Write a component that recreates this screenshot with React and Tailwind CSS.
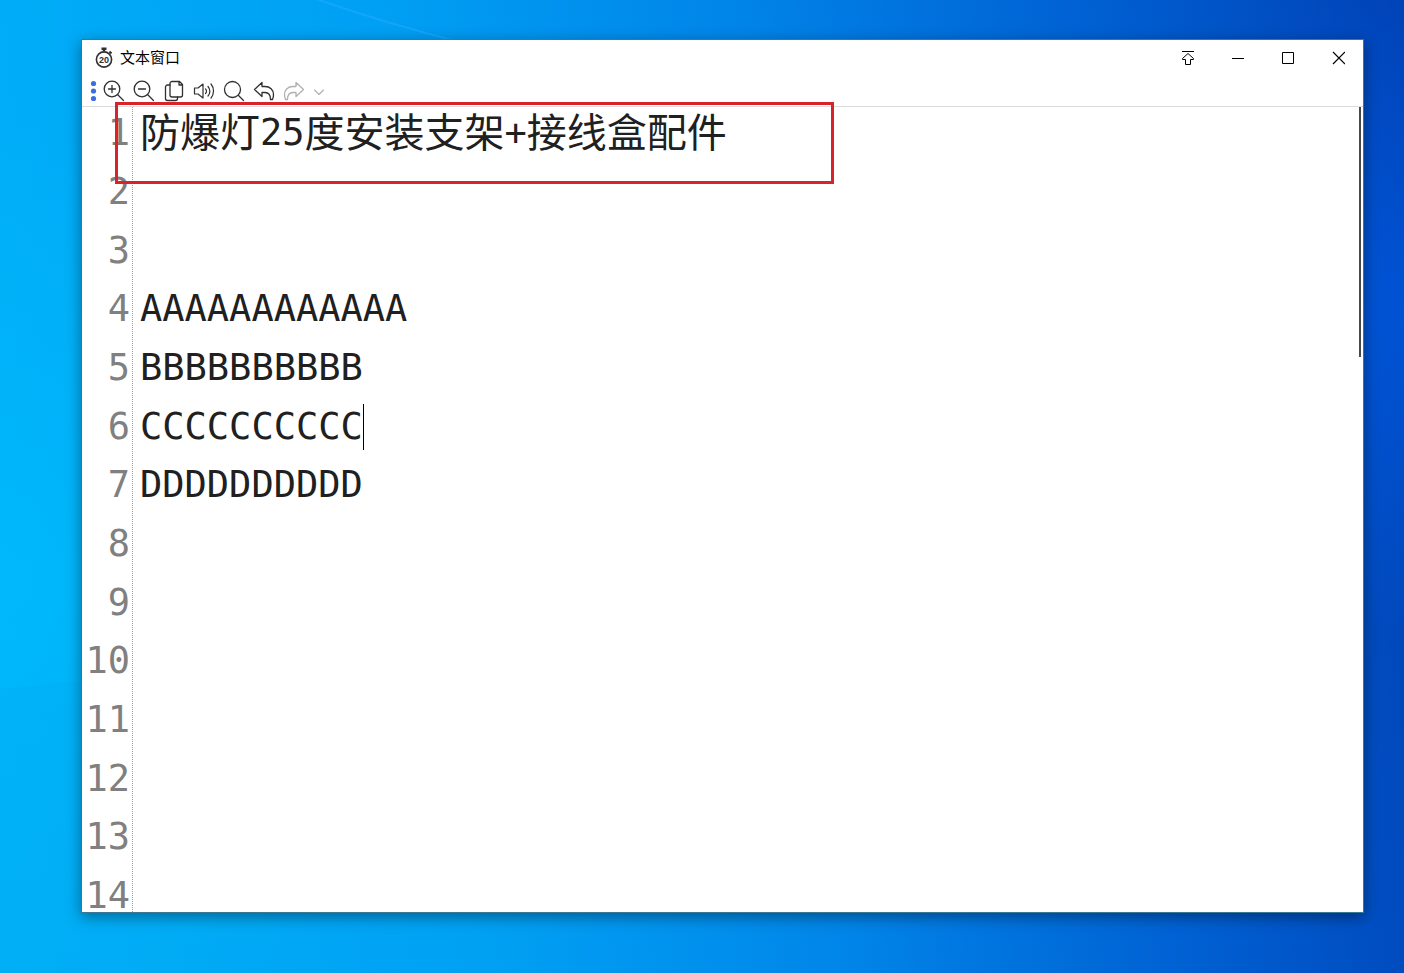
const lines = [
  ['防爆灯', '25', '度安装支架', '+', '接线盒配件'],
  [],
  [],
  ['AAAAAAAAAAAA'],
  ['BBBBBBBBBB'],
  ['CCCCCCCCCC'],
  ['DDDDDDDDDD'],
];

const caretLine = 5;

const lineNumbers = Array.from({ length: 14 }, (_, i) => i + 1);

const isLatin = (text) => /^[\x20-\x7e]+$/.test(text);

function Icon({ children, size = 22, width = 1.3 }) {
  return (
    <svg
      width={size}
      height={size}
      viewBox={`0 0 ${size} ${size}`}
      fill="none"
      stroke="currentColor"
      strokeWidth={width}
      strokeLinecap="round"
      strokeLinejoin="round"
      aria-hidden="true"
    >
      {children}
    </svg>
  );
}

function ToolButton({ label, disabled, small, children }) {
  return (
    <button
      type="button"
      title={label}
      aria-label={label}
      disabled={disabled}
      className={`flex h-[30px] items-center justify-center ${small ? 'w-5' : 'w-[30px]'} ${
        disabled ? 'text-[#b0b0b0]' : 'text-[#303030] hover:bg-gray-100'
      }`}
    >
      {children}
    </button>
  );
}

function WindowButton({ label, children }) {
  return (
    <button
      type="button"
      title={label}
      aria-label={label}
      className="flex h-9 w-[50px] items-center justify-center text-black hover:bg-gray-100"
    >
      <svg width="14" height="14" viewBox="0 0 14 14" fill="none" stroke="currentColor" aria-hidden="true">
        {children}
      </svg>
    </button>
  );
}

function TitleBar() {
  return (
    <header className="flex h-9 items-center justify-between pl-3">
      <div className="flex items-center gap-1.5">
        <svg width="20" height="22" viewBox="0 0 20 22" fill="none" stroke="#303030" aria-hidden="true">
          <path d="M7.5 1.8h5M10 1.5v3" strokeWidth="2.4" />
          <path d="M15.5 4.5l2 2" strokeWidth="2" />
          <circle cx="10" cy="12.5" r="7.6" strokeWidth="1.6" />
          <text x="10" y="16" textAnchor="middle" fontSize="9" fontWeight="700" fontFamily="Liberation Sans" fill="#303030" stroke="none">
            20
          </text>
        </svg>
        <h1 className="text-[15px] leading-5 text-black">文本窗口</h1>
      </div>
      <div className="flex">
        <WindowButton label="置顶">
          <path d="M1 .5h12M7 2.5l5.5 5v1H9.5v5h-5v-5h-3v-1z" />
        </WindowButton>
        <WindowButton label="最小化">
          <path d="M1 7.5h12" />
        </WindowButton>
        <WindowButton label="最大化">
          <path d="M1.5 1.5h11v11h-11z" />
        </WindowButton>
        <WindowButton label="关闭">
          <path d="M2 1l12 12M14 1L2 13" strokeWidth="1.2" />
        </WindowButton>
      </div>
    </header>
  );
}

function Toolbar() {
  return (
    <div role="toolbar" className="flex h-[31px] items-center border-b border-[#dcdcdc] pl-[7px]">
      <svg width="10" height="22" viewBox="0 0 10 22" fill="#3b6fe0" aria-hidden="true">
        <circle cx="4.5" cy="3.5" r="2.6" />
        <circle cx="4.5" cy="11" r="2.6" />
        <circle cx="4.5" cy="18.5" r="2.6" />
      </svg>
      <ToolButton label="放大">
        <Icon>
          <circle cx="9" cy="9" r="7.8" />
          <path d="M14.5 14.5l6 6M9 5.5v7M5.5 9h7" />
        </Icon>
      </ToolButton>
      <ToolButton label="缩小">
        <Icon>
          <circle cx="9" cy="9" r="7.8" />
          <path d="M14.5 14.5l6 6M5.5 9h7" />
        </Icon>
      </ToolButton>
      <ToolButton label="复制">
        <Icon>
          <path d="M9 1.5h7.5l3 3V15a2 2 0 0 1-2 2H9a2 2 0 0 1-2-2V3.5a2 2 0 0 1 2-2zM16 1.5V5h3.5" />
          <path d="M7 5H4.5a2 2 0 0 0-2 2v11.5a2 2 0 0 0 2 2h8a2 2 0 0 0 2-2V17" />
        </Icon>
      </ToolButton>
      <ToolButton label="朗读">
        <Icon width={1.2}>
          <path d="M1.5 8v6H5l5 4V4L5 8z" />
          <path d="M12.5 9a3 3 0 0 1 0 4.5M15 6.5a7 7 0 0 1 0 9.5M18 4a11 11 0 0 1 0 14" />
        </Icon>
      </ToolButton>
      <ToolButton label="查找">
        <Icon>
          <circle cx="9.5" cy="9.5" r="8" />
          <path d="M15.5 15.5l5 5" />
        </Icon>
      </ToolButton>
      <ToolButton label="撤销">
        <Icon>
          <path d="M1.5 9.5L9 2.5v4h3c5 0 8.5 3.5 8.5 8 0 2-.3 3.500-1 5h-2c0-4-1.500-7-5.500-7H9v4z" />
        </Icon>
      </ToolButton>
      <ToolButton label="重做" disabled>
        <Icon>
          <path d="M20.5 9.5L13 2.5v4h-3c-5 0-8.5 3.5-8.5 8 0 2 .3 3.500 1 5h2c0-4 1.500-7 5.500-7H13v4z" />
        </Icon>
      </ToolButton>
      <ToolButton label="更多" disabled small>
        <Icon size={12} width={1.1}>
          <path d="M1.5 5L6 9.5 10.5 5" />
        </Icon>
      </ToolButton>
    </div>
  );
}

function Editor() {
  return (
    <div className="flex min-h-0 flex-1 overflow-hidden">
      {/* Line numbers */}
      <ol
        aria-hidden="true"
        className="grid w-[51px] shrink-0 auto-rows-[59px_59px_58px] border-r border-dotted border-[#a0a0a0] pr-0.5 text-right font-['DejaVu_Sans_Mono',monospace] text-[37px] leading-[52px] text-[#808080]"
      >
        {lineNumbers.map((n) => (
          <li key={n}>{n}</li>
        ))}
      </ol>

      {/* Text */}
      <div
        role="textbox"
        aria-multiline="true"
        aria-label="文本"
        contentEditable
        suppressContentEditableWarning
        spellCheck={false}
        className="grid min-w-0 flex-1 auto-rows-[59px_59px_58px] pl-[7px] text-[40px] leading-[52px] text-[#202020] outline-none"
      >
        {lines.map((runs, i) => (
          <div key={i} className="flex h-[52px] items-center whitespace-pre">
            {runs.map((run, j) => (
              <span
                key={j}
                className={isLatin(run) ? "font-['DejaVu_Sans_Mono',monospace] text-[37px]" : undefined}
              >
                {run}
              </span>
            ))}
            {i === caretLine && <span className="h-[46px] w-px bg-black" />}
          </div>
        ))}
      </div>

      {/* Scroll thumb */}
      <div className="mr-0.5 h-[31%] w-0.5 bg-[#484848]" />
    </div>
  );
}

function Wallpaper() {
  return (
    <svg
      className="absolute inset-0 h-full w-full"
      viewBox="0 0 1404 973"
      preserveAspectRatio="none"
      fill="none"
      aria-hidden="true"
    >
      <defs>
        <linearGradient id="beam">
          <stop offset="0" stopColor="#00a8f0" stopOpacity="0.25" />
          <stop offset="1" stopColor="#00a8f0" stopOpacity="0" />
        </linearGradient>
      </defs>
      <path d="M305 -5Q380 22 460 42" stroke="#20a8ff" strokeOpacity="0.6" strokeWidth="2" />
      <path d="M0 689L1000 590V973H0z" fill="url(#beam)" />
    </svg>
  );
}

export default function App() {
  return (
    <div className="relative flex h-screen overflow-hidden bg-[radial-gradient(circle_at_100%_32%,#0060f080,#0060f000_320px),radial-gradient(circle_at_0%_60%,#00c0ff90,#00c0ff00_480px),linear-gradient(84deg,#00b0f8,#00a0f4_32%,#0084e8_56%,#0062d4_78%,#0042b6)] pt-[39px] pr-10 pb-[60px] pl-[81px] font-['Liberation_Sans','Noto_Sans_CJK_SC',sans-serif]">
      <Wallpaper />
      <main className="relative flex min-w-0 flex-1 flex-col border border-[#3a7898] bg-white shadow-[0_4px_14px_rgba(0,0,0,0.4)]">
        <TitleBar />
        <Toolbar />
        <Editor />
        {/* Highlight frame around the first line */}
        <div className="pointer-events-none absolute top-[62px] left-[33px] h-[82px] w-[719px] border-3 border-[#d8232a]" />
      </main>
    </div>
  );
}
